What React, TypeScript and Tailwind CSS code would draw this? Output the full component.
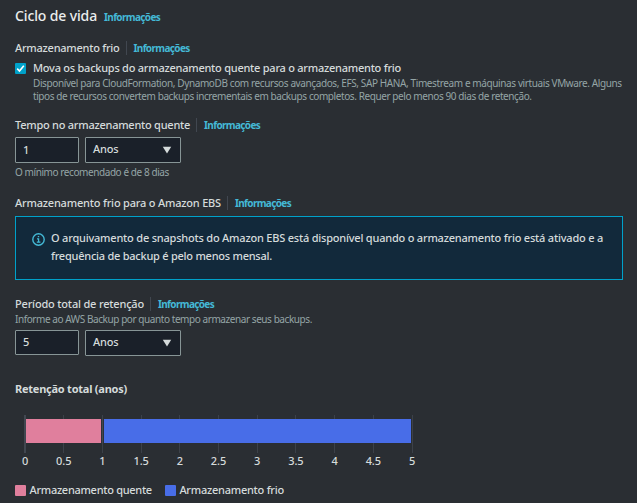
import type { ReactNode } from "react";

function Info() {
  return <a className="text-[10px] leading-[14px] font-bold tracking-[-0.64px] text-[#44b9d6]">Informações</a>;
}

function Label({ children, track = "tracking-[-0.25px]" }: { children: ReactNode; track?: string }) {
  return (
    <div className="flex h-[18px] items-center whitespace-nowrap">
      <span className={`text-[11px] font-medium ${track}`}>{children}</span>
      <span className="mr-[7px] ml-[6px] h-[14px] w-px bg-[#414750]" />
      <Info />
    </div>
  );
}

function Period({ value, inputClass }: { value: string; inputClass: string }) {
  return (
    <div className="flex h-[26px] items-start gap-[6px] text-[11px] font-medium">
      <div className={`flex w-16 items-center rounded-[1px] border border-[#879596] bg-[#1a2029] pl-[7px] ${inputClass}`}>{value}</div>
      <div className="flex h-[26px] w-24 items-center justify-between rounded-[1px] border border-[#879596] bg-[#1a2029] pr-[8px] pl-[7px]">
        <span className="pb-px tracking-[-0.2px]">Anos</span>
        <svg width="10" height="8" viewBox="0 0 10 8">
          <path d="M.8 .8h8.4L5 7.6z" fill="#d5dbdb" />
        </svg>
      </div>
    </div>
  );
}

const ticks = [0, 0.5, 1, 1.5, 2, 2.5, 3, 3.5, 4, 4.5, 5];

function RetentionChart() {
  return (
    <svg width="430" height="60" viewBox="0 0 430 60" className="block">
      {ticks.map((t) => (
        <rect key={t} x={Math.round(24.5 + t * 77.4)} y="4" width="1" height="38" fill="#3c4149" />
      ))}
      <rect x="24" y="4" width="2" height="38" fill="#414750" />
      <rect x="26" y="8" width="75" height="24" fill="#e07f9d" />
      <rect x="101" y="8" width="3" height="24" fill="#2d3039" />
      <rect x="102" y="8" width="1" height="24" fill="#414750" />
      <rect x="104" y="8" width="307" height="24" fill="#486de8" />
      {ticks.map((t) => (
        <text key={t} x={25 + t * 77.4} y="54" textAnchor="middle" fontSize="11" letterSpacing="-0.1" className="fill-[#d5dbdb] font-medium">
          {t}
        </text>
      ))}
    </svg>
  );
}

export default function App() {
  return (
    <main className="h-[503px] w-[637px] overflow-hidden bg-[#2a2e33] font-['Noto_Sans',sans-serif] text-[#d5dbdb]">
      <div className="pr-[14px] pl-[15px]">
        <header className="flex h-[39px] items-center gap-[7px] pb-[8px]">
          <h1 className="text-[14px] leading-5 font-medium tracking-[-0.13px] text-[#eaeded]">Ciclo de vida</h1>
          <span className="flex pt-[3px]"><Info /></span>
        </header>

        <Label>Armazenamento frio</Label>
        <div className="mt-[2px] flex h-[46px] items-start gap-[7px]">
          <span className="mt-[4px] flex h-[11px] w-[11px] items-center justify-center rounded-[1px] bg-[#00a1c9]">
            <svg width="9" height="9" viewBox="0 0 9 9">
              <path d="M1.2 4.6 3.5 7 7.8 1.7" fill="none" stroke="#fff" strokeWidth="1.6" />
            </svg>
          </span>
          <div className="whitespace-nowrap">
            <p className="h-[18px] text-[11px] leading-[18px] font-medium tracking-[-0.246px]">Mova os backups do armazenamento quente para o armazenamento frio</p>
            <p className="text-[10px] leading-[13px] tracking-[-0.39px] text-[#95a5a6]">Disponível para CloudFormation, DynamoDB com recursos avançados, EFS, SAP HANA, Timestream e máquinas virtuais VMware. Alguns</p>
            <p className="text-[10px] leading-[13px] tracking-[-0.41px] text-[#95a5a6]">tipos de recursos convertem backups incrementais em backups completos. Requer pelo menos 90 dias de retenção.</p>
          </div>
        </div>

        <div className="mt-[11px]">
          <Label>Tempo no armazenamento quente</Label>
          <div className="mt-[3px]">
            <Period value="1" inputClass="h-[26px]" />
          </div>
          <p className="mt-px text-[10px] leading-4 tracking-[-0.42px] text-[#95a5a6]">O mínimo recomendado é de 8 dias</p>
        </div>

        <div className="mt-[14px]">
          <Label track="tracking-[-0.2px]">Armazenamento frio para o Amazon EBS</Label>
          <div className="mt-[4px] flex h-[64px] gap-[6px] border border-[#00a1c9] bg-[#12293b] pt-[12px] pl-4 whitespace-nowrap">
            <svg width="13" height="13" viewBox="0 0 13 13" className="mt-[4px] shrink-0" fill="none" stroke="#44b9d6" strokeWidth="1.4">
              <circle cx="6.5" cy="6.5" r="5.7" />
              <path d="M5 5.9h1.6v3.3M4.8 9.2h3.6M5.8 3.7h1.4" strokeWidth="1.2" />
            </svg>
            <div className="text-[11px] leading-[18px] font-medium">
              <p className="tracking-[-0.208px]">O arquivamento de snapshots do Amazon EBS está disponível quando o armazenamento frio está ativado e a</p>
              <p className="tracking-[-0.244px]">frequência de backup é pelo menos mensal.</p>
            </div>
          </div>
        </div>

        <div className="mt-[15px]">
          <Label track="tracking-[-0.185px]">Período total de retenção</Label>
          <p className="-mt-[2px] h-[19px] text-[10px] leading-[17px] tracking-[-0.43px] text-[#95a5a6]">Informe ao AWS Backup por quanto tempo armazenar seus backups.</p>
          <Period value="5" inputClass="h-[25px]" />
        </div>

        <h2 className="mt-[24px] h-[18px] text-[11px] leading-[18px] font-bold tracking-[-0.24px]">Retenção total (anos)</h2>
      </div>

      <div className="mt-[13px]">
        <RetentionChart />
      </div>
      <div className="mt-[10px] flex h-[18px] items-center gap-[13px] pl-[15px] text-[11px] font-medium">
        <span className="flex items-center gap-[3.5px] tracking-[-0.29px]"><i className="h-[11px] w-[11px] rounded-[1px] bg-[#e07f9d]" />Armazenamento quente</span>
        <span className="flex items-center gap-[3.5px] tracking-[-0.25px]"><i className="h-[11px] w-[11px] rounded-[1px] bg-[#486de8]" />Armazenamento frio</span>
      </div>
    </main>
  );
}
